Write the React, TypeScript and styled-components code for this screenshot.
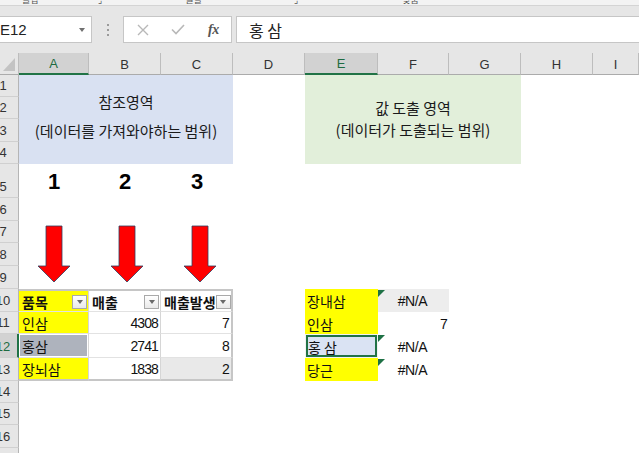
import React from "react";
import styled, { createGlobalStyle, css } from "styled-components";

const GlobalStyle = createGlobalStyle`
  html, body { margin: 0; padding: 0; background: #fff; }
  body { font-family: "Noto Sans CJK KR", "Liberation Sans", sans-serif; overflow: hidden; }
  * { box-sizing: border-box; }
`;

const ROW_H = [22, 22, 23, 22, 34, 23, 22, 23, 23, 23, 22, 24, 23, 22, 22, 23, 23];
const COLS = ["A", "B", "C", "D", "E", "F", "G", "H", "I"];
const ACTIVE_COLS = ["A", "E"];
const ACTIVE_ROW = 12;

const Root = styled.div`
  width: 639px;
  height: 453px;
  overflow: hidden;
  display: flex;
  flex-direction: column;
  background: #fff;
`;

const Ribbon = styled.div`
  height: 6px;
  flex: none;
  background: #f3f3f3;
  border-bottom: 1px solid #d4d4d4;
  overflow: hidden;
  display: flex;
  align-items: flex-end;
`;

const RibbonLabel = styled.span<{ $ml: number }>`
  margin-left: ${(p) => p.$ml}px;
  font-size: 9px;
  line-height: 9px;
  margin-bottom: 1px;
  color: #555;
  white-space: nowrap;
`;

const FormulaBar = styled.div`
  height: 47px;
  flex: none;
  background: #e6e6e6;
  display: flex;
  align-items: center;
  padding: 10px 0;
`;

const NameBox = styled.div`
  width: 97px;
  margin-left: -5px;
  height: 27px;
  background: #fff;
  border: 1px solid #c6c6c6;
  display: flex;
  align-items: center;
  justify-content: space-between;
  padding: 0 6px 0 4px;
  font-family: "Liberation Sans", sans-serif;
  font-size: 15px;
  color: #222;
`;

const Caret = styled.span`
  width: 0;
  height: 0;
  border-left: 3.5px solid transparent;
  border-right: 3.5px solid transparent;
  border-top: 4px solid #707070;
`;

const Splitter = styled.div`
  width: 31px;
  display: flex;
  flex-direction: column;
  align-items: center;
  gap: 3px;
`;

const Dot = styled.span`
  width: 2px;
  height: 2px;
  background: #9a9a9a;
`;

const FxBox = styled.div`
  width: 109px;
  height: 27px;
  background: #fff;
  border: 1px solid #c6c6c6;
  display: flex;
  align-items: center;
  padding-left: 13px;
  gap: 22px;
`;

const FxLabel = styled.span`
  font-family: "Liberation Serif", serif;
  font-style: italic;
  font-weight: bold;
  font-size: 14px;
  color: #555;
  letter-spacing: -0.5px;
  margin-left: 1px;
`;

const FormulaInput = styled.div`
  flex: 1;
  margin-left: 4px;
  height: 27px;
  background: #fff;
  border: 1px solid #c6c6c6;
  border-right: none;
  display: flex;
  align-items: center;
  padding-left: 12px;
  font-size: 16px;
  color: #222;
`;

const Sheet = styled.div`
  flex: none;
  display: grid;
  grid-template-columns: 19px 70px 72px 72px 72px 73px 71px 72px 72px 46px;
  grid-template-rows: 22px ${ROW_H.map((h) => `${h}px`).join(" ")};
`;

type Pos = { $c: number; $r: number; $cs?: number; $rs?: number };
const at = css<Pos>`
  grid-column: ${(p) => p.$c} / span ${(p) => p.$cs ?? 1};
  grid-row: ${(p) => p.$r} / span ${(p) => p.$rs ?? 1};
`;

const Corner = styled.div`
  grid-column: 1;
  grid-row: 1;
  background: #e6e6e6;
  border-right: 1px solid #bdbdbd;
  border-bottom: 1px solid #ababab;
  display: flex;
  align-items: flex-end;
  justify-content: flex-end;
  padding: 0 3px 3px 0;
`;

const ColHead = styled.div<Pos & { $active: boolean }>`
  ${at};
  background: ${(p) => (p.$active ? "#d2d2d2" : "#e6e6e6")};
  border-right: 1px solid #bdbdbd;
  border-bottom: ${(p) => (p.$active ? "2px solid #217346" : "1px solid #ababab")};
  color: ${(p) => (p.$active ? "#1e6b41" : "#333")};
  font-family: "Liberation Sans", sans-serif;
  font-size: 13px;
  display: flex;
  align-items: center;
  justify-content: center;
  padding-top: 1px;
`;

const RowHead = styled.div<Pos & { $active: boolean }>`
  ${at};
  background: ${(p) => (p.$active ? "#d2d2d2" : "#e6e6e6")};
  border-bottom: 1px solid #d0d0d0;
  border-right: ${(p) => (p.$active ? "2px solid #217346" : "1px solid #b5b5b5")};
  color: ${(p) => (p.$active ? "#1e6b41" : "#333")};
  overflow: hidden;
  display: flex;
  align-items: flex-end;
  padding-bottom: 2px;
`;

const RowLabel = styled.span`
  flex: none;
  width: 38px;
  margin-left: -16px;
  text-align: center;
  font-family: "Liberation Sans", sans-serif;
  font-size: 13px;
  line-height: 16px;
`;

const Region = styled.div<Pos & { $bg: string; $lh: number; $pb: number }>`
  ${at};
  background: ${(p) => p.$bg};
  display: flex;
  flex-direction: column;
  align-items: center;
  justify-content: center;
  padding-bottom: ${(p) => p.$pb}px;
  font-size: 15px;
  line-height: ${(p) => p.$lh}px;
  color: #1a1a1a;
  white-space: nowrap;
`;

const BigNum = styled.div<Pos>`
  ${at};
  display: flex;
  align-items: center;
  justify-content: center;
  padding-top: 2px;
  font-family: "Liberation Sans", sans-serif;
  font-weight: bold;
  font-size: 22px;
  color: #000;
`;

const ArrowSlot = styled.div<Pos & { $shift: number }>`
  ${at};
  display: flex;
  justify-content: center;
  align-items: flex-start;
  padding-top: 4px;
  padding-left: ${(p) => p.$shift}px;
`;

const TableCell = styled.div<
  Pos & { $bg?: string; $align?: "left" | "right"; $bold?: boolean; $first?: boolean; $last?: boolean; $rightEdge?: boolean; $inset?: boolean }
>`
  ${at};
  background: ${(p) => p.$bg ?? "#fff"};
  border-top: ${(p) => (p.$first ? "2px solid #c6c6c6" : "none")};
  border-bottom: ${(p) => (p.$last ? "2px solid #c6c6c6" : "1px solid #e2e2e2")};
  border-right: ${(p) => (p.$rightEdge ? "2px solid #c6c6c6" : "1px solid #d6d6d6")};
  box-shadow: ${(p) => (p.$inset ? "inset 0 0 0 1px #ffffff" : "none")};
  display: flex;
  align-items: center;
  justify-content: ${(p) => (p.$align === "right" ? "flex-end" : "space-between")};
  padding: ${(p) => (p.$align === "right" ? "1px 2px 0 0" : "1px 1px 0 3px")};
  font-size: 14px;
  font-weight: ${(p) => (p.$bold ? 700 : 400)};
  color: #111;
  white-space: nowrap;
  overflow: hidden;
`;

const Num = styled.span`
  font-family: "Liberation Sans", sans-serif;
  font-size: 14px;
  font-weight: 400;
  letter-spacing: -0.9px;
  color: #111;
`;

const FilterBtn = styled.span`
  flex: none;
  width: 15px;
  height: 14px;
  border: 1px solid #a9a9a9;
  background: linear-gradient(#ffffff, #e9e9e9);
  display: flex;
  align-items: center;
  justify-content: center;
  &::after {
    content: "";
    width: 0;
    height: 0;
    border-left: 3.5px solid transparent;
    border-right: 3.5px solid transparent;
    border-top: 4px solid #6a6a6a;
  }
`;

const LookupCell = styled.div<Pos>`
  ${at};
  background: #ffff00;
  display: flex;
  align-items: center;
  padding: 1px 0 0 2px;
  font-size: 14px;
  color: #111;
  white-space: nowrap;
`;

const SelectedCell = styled.div<Pos>`
  ${at};
  background: #f2f2f2;
  padding: 1px;
  display: flex;
`;

const SelBox = styled.div`
  flex: 1;
  border: 2px solid #217346;
  background: #dae3f3;
  display: flex;
  align-items: center;
  padding: 1px 0 0 0;
  font-size: 14px;
  color: #111;
  white-space: nowrap;
`;

const ResultCell = styled.div<Pos & { $bg?: string; $align: "center" | "right"; $flag?: boolean }>`
  ${at};
  position: relative;
  background: ${(p) => p.$bg ?? "transparent"};
  display: flex;
  align-items: center;
  justify-content: ${(p) => (p.$align === "right" ? "flex-end" : "center")};
  padding: 1px 2px 0 0;
  &::before {
    content: "";
    display: ${(p) => (p.$flag ? "block" : "none")};
    position: absolute;
    top: 1px;
    left: 0;
    width: 0;
    height: 0;
    border-top: 7px solid #1e7145;
    border-right: 7px solid transparent;
  }
`;

const ErrText = styled.span`
  font-family: "Liberation Sans", sans-serif;
  font-size: 14px;
  letter-spacing: -0.4px;
  color: #111;
`;

const DownArrow: React.FC = () => (
  <svg width="34" height="58" viewBox="0 0 34 58">
    <polygon
      points="9,1 25,1 25,41 33,41 17,57 1,41 9,41"
      fill="#ff0000"
      stroke="#2f3f5f"
      strokeWidth="0.8"
      strokeLinejoin="miter"
    />
  </svg>
);

const CloseIcon: React.FC = () => (
  <svg width="12" height="12" viewBox="0 0 12 12">
    <path d="M1 1 L11 11 M11 1 L1 11" stroke="#b8b8b8" strokeWidth="1.4" fill="none" />
  </svg>
);

const CheckIcon: React.FC = () => (
  <svg width="14" height="11" viewBox="0 0 14 11">
    <path d="M1 5.5 L5 9.5 L13 1" stroke="#b8b8b8" strokeWidth="1.6" fill="none" />
  </svg>
);

const CornerTriangle: React.FC = () => (
  <svg width="12" height="13" viewBox="0 0 12 13">
    <polygon points="12,0 12,13 0,13" fill="#c3c3c3" />
  </svg>
);

const colIndex = (letter: string) => COLS.indexOf(letter) + 2;
const rowIndex = (n: number) => n + 1;

const tableRows = [
  { name: "인삼", sales: "4308", count: "7", nameBg: "#ffff00", countBg: "#fff" },
  { name: "홍삼", sales: "2741", count: "8", nameBg: "#aeb3bd", countBg: "#fff", inset: true },
  { name: "장뇌삼", sales: "1838", count: "2", nameBg: "#ffff00", countBg: "#e9e9e9" },
];

const lookups = [
  { row: 10, name: "장내삼", result: "#N/A", bg: "#ededed", flag: true },
  { row: 11, name: "인삼", result: "7", flag: false },
  { row: 12, name: "홍 삼", result: "#N/A", flag: true, selected: true },
  { row: 13, name: "당근", result: "#N/A", flag: true },
];

export default function App() {
  return (
    <Root>
      <GlobalStyle />
      <Ribbon>
        <RibbonLabel $ml={22}>클립</RibbonLabel>
        <RibbonLabel $ml={59}>⌟</RibbonLabel>
        <RibbonLabel $ml={84}>글꼴</RibbonLabel>
        <RibbonLabel $ml={92}>⌟</RibbonLabel>
        <RibbonLabel $ml={104}>맞춤</RibbonLabel>
      </Ribbon>
      <FormulaBar>
        <NameBox>
          <span>E12</span>
          <Caret />
        </NameBox>
        <Splitter>
          <Dot />
          <Dot />
          <Dot />
        </Splitter>
        <FxBox>
          <CloseIcon />
          <CheckIcon />
          <FxLabel>fx</FxLabel>
        </FxBox>
        <FormulaInput>홍 삼</FormulaInput>
      </FormulaBar>
      <Sheet>
        <Corner>
          <CornerTriangle />
        </Corner>
        {COLS.map((c) => (
          <ColHead key={c} $c={colIndex(c)} $r={1} $active={ACTIVE_COLS.includes(c)}>
            {c}
          </ColHead>
        ))}
        <ColHead $c={11} $r={1} $active={false} />
        {ROW_H.map((_, i) => (
          <RowHead key={i} $c={1} $r={rowIndex(i + 1)} $active={i + 1 === ACTIVE_ROW}>
            <RowLabel>{i + 1}</RowLabel>
          </RowHead>
        ))}

        <Region $c={2} $cs={3} $r={2} $rs={4} $bg="#d9e1f2" $lh={29} $pb={8}>
          <span>참조영역</span>
          <span>(데이터를 가져와야하는 범위)</span>
        </Region>
        <Region $c={6} $cs={3} $r={2} $rs={4} $bg="#e2efda" $lh={22} $pb={1}>
          <span>값 도출 영역</span>
          <span>(데이터가 도출되는 범위)</span>
        </Region>

        {["1", "2", "3"].map((n, i) => (
          <BigNum key={n} $c={2 + i} $r={rowIndex(5)}>
            {n}
          </BigNum>
        ))}

        {[0, 4, 6].map((shift, i) => (
          <ArrowSlot key={i} $c={2 + i} $r={rowIndex(7)} $rs={3} $shift={shift}>
            <DownArrow />
          </ArrowSlot>
        ))}

        <TableCell $c={2} $r={rowIndex(10)} $bg="#ffff00" $bold $first>
          <span>품목</span>
          <FilterBtn />
        </TableCell>
        <TableCell $c={3} $r={rowIndex(10)} $bold $first>
          <span>매출</span>
          <FilterBtn />
        </TableCell>
        <TableCell $c={4} $r={rowIndex(10)} $bold $first $rightEdge>
          <span>매출발생</span>
          <FilterBtn />
        </TableCell>
        {tableRows.map((r, i) => {
          const row = rowIndex(11 + i);
          const last = i === tableRows.length - 1;
          return (
            <React.Fragment key={r.name}>
              <TableCell $c={2} $r={row} $bg={r.nameBg} $last={last} $inset={r.inset}>
                <span>{r.name}</span>
              </TableCell>
              <TableCell $c={3} $r={row} $align="right" $last={last}>
                <Num>{r.sales}</Num>
              </TableCell>
              <TableCell $c={4} $r={row} $align="right" $bg={r.countBg} $last={last} $rightEdge>
                <Num>{r.count}</Num>
              </TableCell>
            </React.Fragment>
          );
        })}

        {lookups.map((l) => (
          <React.Fragment key={l.row}>
            {l.selected ? (
              <SelectedCell $c={6} $r={rowIndex(l.row)}>
                <SelBox>{l.name}</SelBox>
              </SelectedCell>
            ) : (
              <LookupCell $c={6} $r={rowIndex(l.row)}>
                {l.name}
              </LookupCell>
            )}
            <ResultCell
              $c={7}
              $r={rowIndex(l.row)}
              $bg={l.bg}
              $flag={l.flag}
              $align={l.result === "#N/A" ? "center" : "right"}
            >
              {l.result === "#N/A" ? <ErrText>{l.result}</ErrText> : <Num>{l.result}</Num>}
            </ResultCell>
          </React.Fragment>
        ))}
      </Sheet>
    </Root>
  );
}
